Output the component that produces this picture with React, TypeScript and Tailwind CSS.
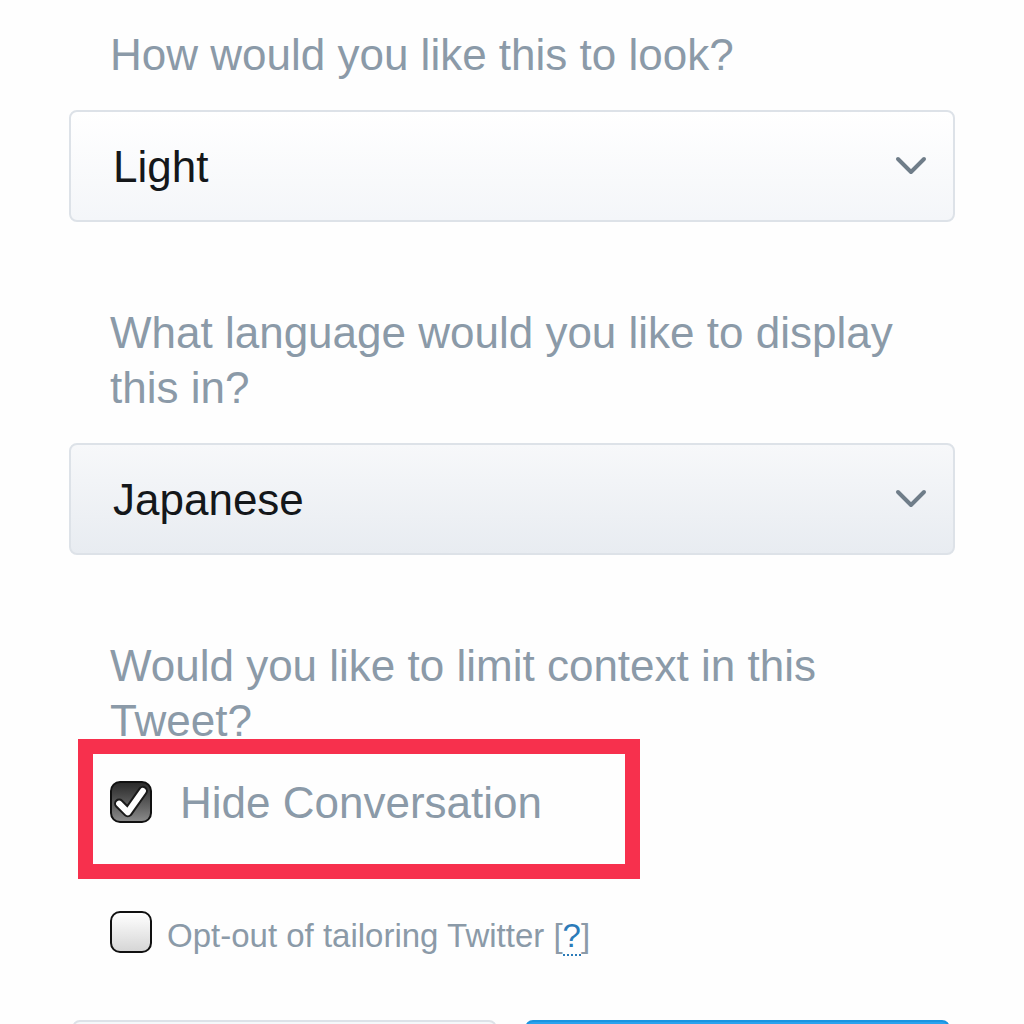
const font = { fontFamily: '"Liberation Sans", Arial, sans-serif' };

interface SelectBoxProps {
  value: string;
  className?: string;
}

const Chevron = () => (
  <svg viewBox="0 0 32 20" className="h-[20px] w-[32px]">
    <path
      d="M3 3 L16 16 L29 3"
      fill="none"
      stroke="#6f7d89"
      strokeWidth="4"
      strokeLinecap="round"
      strokeLinejoin="round"
    />
  </svg>
);

const SelectBox = ({ value, className }: SelectBoxProps) => (
  <div
    className={`mt-[28px] flex h-[112px] items-center justify-between rounded-[8px] border-2 border-[#dde2e8] pl-[42px] pr-[26px] ${className ?? ""}`}
  >
    <span className="text-[44px] leading-[55px] text-[#14171a]">{value}</span>
    <Chevron />
  </div>
);

const Label = ({ children }: { children: React.ReactNode }) => (
  <p className="pl-[41px] text-[44px] leading-[55px] text-[#8b9aa8]">
    {children}
  </p>
);

const CheckedBox = () => (
  <span className="flex size-[42px] shrink-0 items-center justify-center rounded-[10px] border-2 border-[#111] bg-gradient-to-b from-[#2b2b2b] to-[#8a8a8a]">
    <svg viewBox="0 0 24 24" className="size-[38px]">
      <path
        d="M4.5 13 L10 18.5 L19.5 5"
        fill="none"
        stroke="#1a1a1a"
        strokeWidth="6.4"
        strokeLinejoin="round"
        strokeLinecap="round"
      />
      <path
        d="M4.5 13 L10 18.5 L19.5 5"
        fill="none"
        stroke="#fff"
        strokeWidth="3.8"
        strokeLinejoin="round"
        strokeLinecap="round"
      />
    </svg>
  </span>
);

const EmptyBox = () => (
  <span className="block size-[42px] shrink-0 rounded-[10px] border-2 border-[#111] bg-gradient-to-b from-[#ffffff] to-[#d6d6d6]" />
);

export default function App() {
  return (
    <div className="min-h-[1024px] overflow-hidden bg-[#fefefe]" style={font}>
      <div className="relative ml-[69px] w-[886px] pt-[27px]">
        <Label>How would you like this to look?</Label>
        <SelectBox
          value="Light"
          className="bg-gradient-to-b from-[#ffffff] to-[#f4f6f9]"
        />

        <div className="mt-[83px]">
          <Label>
            What language would you like to display
            <br />
            this in?
          </Label>
        </div>
        <SelectBox
          value="Japanese"
          className="bg-gradient-to-b from-[#f7f8fa] to-[#e8ecf1]"
        />

        <div className="mt-[83px]">
          <Label>
            Would you like to limit context in this
            <br />
            Tweet?
          </Label>
        </div>

        <div className="relative mt-[21px]">
          <label className="flex h-[66px] items-center gap-[28px] pl-[41px]">
            <CheckedBox />
            <span className="text-[44px] leading-[55px] text-[#8b9aa8]">
              Hide Conversation
            </span>
          </label>
          <div className="pointer-events-none absolute left-[9px] top-[-30px] h-[140px] w-[562px] border-[15px] border-[#f7304d]" />
        </div>

        <label className="mt-[75px] flex h-[44px] items-center gap-[15px] pl-[41px]">
          <EmptyBox />
          <span className="pt-[8px] text-[33px] leading-[44px] text-[#8b9aa8]">
            Opt-out of tailoring Twitter [
            <span className="border-b-2 border-dotted border-[#2b7bb9] text-[#2b7bb9]">
              ?
            </span>
            ]
          </span>
        </label>

        <div className="mt-[66px] flex gap-[28px] pl-[3px] pr-[5px]">
          <button className="h-[80px] flex-1 rounded-[8px] border-2 border-[#dde2e8] bg-[#f5f8fa]" />
          <button className="h-[80px] flex-1 rounded-[8px] border-2 border-[#1b95e0] bg-[#2aa3ef]" />
        </div>
      </div>
    </div>
  );
}
